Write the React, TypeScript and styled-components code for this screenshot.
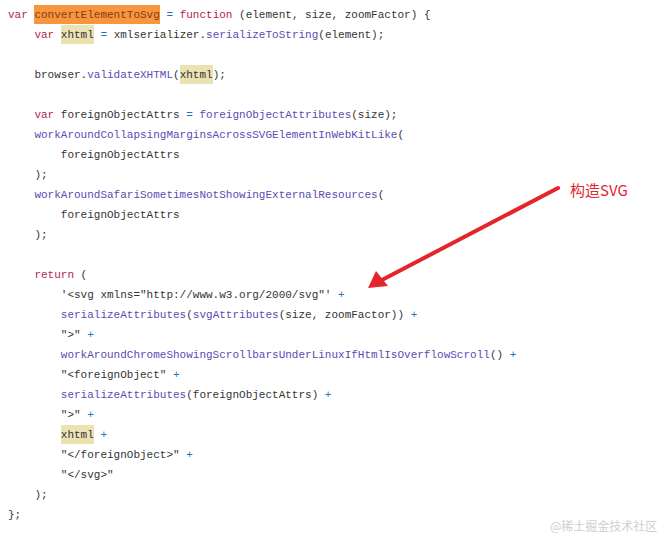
import React from "react";
import styled, { createGlobalStyle } from "styled-components";

const Global = createGlobalStyle`
  html, body { margin: 0; padding: 0; background: #ffffff; }
  body { width: 659px; height: 537px; overflow: hidden; }
`;

const Page = styled.div`
  position: relative;
  width: 659px;
  height: 537px;
  background: #ffffff;
  overflow: hidden;
`;

const Code = styled.div`
  display: flex;
  flex-direction: column;
  padding: 5px 0 0 8px;
  font-family: "Liberation Mono", "DejaVu Sans Mono", monospace;
  font-size: 11px;
  color: #333333;
`;

const Line = styled.div<{ $indent: number }>`
  height: 20px;
  line-height: 20px;
  white-space: pre;
  padding-left: ${(p) => p.$indent * 26.4}px;
`;

type Kind = "kw" | "fn" | "op" | "plain" | "hlDef" | "hlRef";

const colors: Record<Kind, string> = {
  kw: "#b0254a",
  fn: "#5a4bb4",
  op: "#2a6fb8",
  plain: "#333333",
  hlDef: "#8a3a10",
  hlRef: "#333333",
};

const Tok = styled.span<{ $k: Kind }>`
  color: ${(p) => colors[p.$k]};
  ${(p) =>
    p.$k === "hlDef"
      ? `background: #f7963e; display: inline-block; height: 19px; line-height: 20px;`
      : p.$k === "hlRef"
      ? `background: #ebe2b2; display: inline-block; height: 19px; line-height: 20px;`
      : ""}
`;

const Annotation = styled.svg`
  position: absolute;
  left: 0;
  top: 0;
  pointer-events: none;
`;

const Label = styled.div`
  position: absolute;
  left: 570px;
  top: 180px;
  font-family: "Noto Sans CJK SC", "Noto Sans", sans-serif;
  font-size: 15px;
  line-height: 20px;
  color: #e3262c;
`;

const Watermark = styled.div`
  position: absolute;
  left: 550px;
  top: 517px;
  font-family: "Noto Sans CJK SC", sans-serif;
  font-size: 12px;
  line-height: 18px;
  white-space: nowrap;
  color: #cfcfcf;
`;

type T = [Kind, string];
const k = (s: string): T => ["kw", s];
const f = (s: string): T => ["fn", s];
const o = (s: string): T => ["op", s];
const p = (s: string): T => ["plain", s];

const lines: { indent: number; toks: T[] }[] = [
  { indent: 0, toks: [k("var "), ["hlDef", "convertElementToSvg"], p(" "), o("="), p(" "), k("function"), p(" (element, size, zoomFactor) {")] },
  { indent: 1, toks: [k("var "), ["hlRef", "xhtml"], p(" "), o("="), p(" xmlserializer."), f("serializeToString"), p("(element);")] },
  { indent: 0, toks: [] },
  { indent: 1, toks: [p("browser."), f("validateXHTML"), p("("), ["hlRef", "xhtml"], p(");")] },
  { indent: 0, toks: [] },
  { indent: 1, toks: [k("var "), p("foreignObjectAttrs "), o("="), p(" "), f("foreignObjectAttributes"), p("(size);")] },
  { indent: 1, toks: [f("workAroundCollapsingMarginsAcrossSVGElementInWebKitLike"), p("(")] },
  { indent: 2, toks: [p("foreignObjectAttrs")] },
  { indent: 1, toks: [p(");")] },
  { indent: 1, toks: [f("workAroundSafariSometimesNotShowingExternalResources"), p("(")] },
  { indent: 2, toks: [p("foreignObjectAttrs")] },
  { indent: 1, toks: [p(");")] },
  { indent: 0, toks: [] },
  { indent: 1, toks: [k("return"), p(" (")] },
  { indent: 2, toks: [p("'<svg xmlns=\"http://www.w3.org/2000/svg\"' "), o("+")] },
  { indent: 2, toks: [f("serializeAttributes"), p("("), f("svgAttributes"), p("(size, zoomFactor)) "), o("+")] },
  { indent: 2, toks: [p("\">\" "), o("+")] },
  { indent: 2, toks: [f("workAroundChromeShowingScrollbarsUnderLinuxIfHtmlIsOverflowScroll"), p("() "), o("+")] },
  { indent: 2, toks: [p("\"<foreignObject\" "), o("+")] },
  { indent: 2, toks: [f("serializeAttributes"), p("(foreignObjectAttrs) "), o("+")] },
  { indent: 2, toks: [p("\">\" "), o("+")] },
  { indent: 2, toks: [["hlRef", "xhtml"], p(" "), o("+")] },
  { indent: 2, toks: [p("\"</foreignObject>\" "), o("+")] },
  { indent: 2, toks: [p("\"</svg>\"")] },
  { indent: 1, toks: [p(");")] },
  { indent: 0, toks: [p("};")] },
];

export default function App() {
  return (
    <Page>
      <Global />
      <Code>
        {lines.map((l, i) => (
          <Line key={i} $indent={l.indent}>
            {l.toks.length === 0
              ? " "
              : l.toks.map(([kind, s], j) => (
                  <Tok key={j} $k={kind}>
                    {s}
                  </Tok>
                ))}
          </Line>
        ))}
      </Code>
      <Annotation width="659" height="537" viewBox="0 0 659 537">
        <line x1="558" y1="188" x2="380" y2="281" stroke="#e3262c" strokeWidth="4" strokeLinecap="round" />
        <polygon points="368,288 376,271 388,286" fill="#e3262c" />
      </Annotation>
      <Label>构造SVG</Label>
      <Watermark>@稀土掘金技术社区</Watermark>
    </Page>
  );
}
